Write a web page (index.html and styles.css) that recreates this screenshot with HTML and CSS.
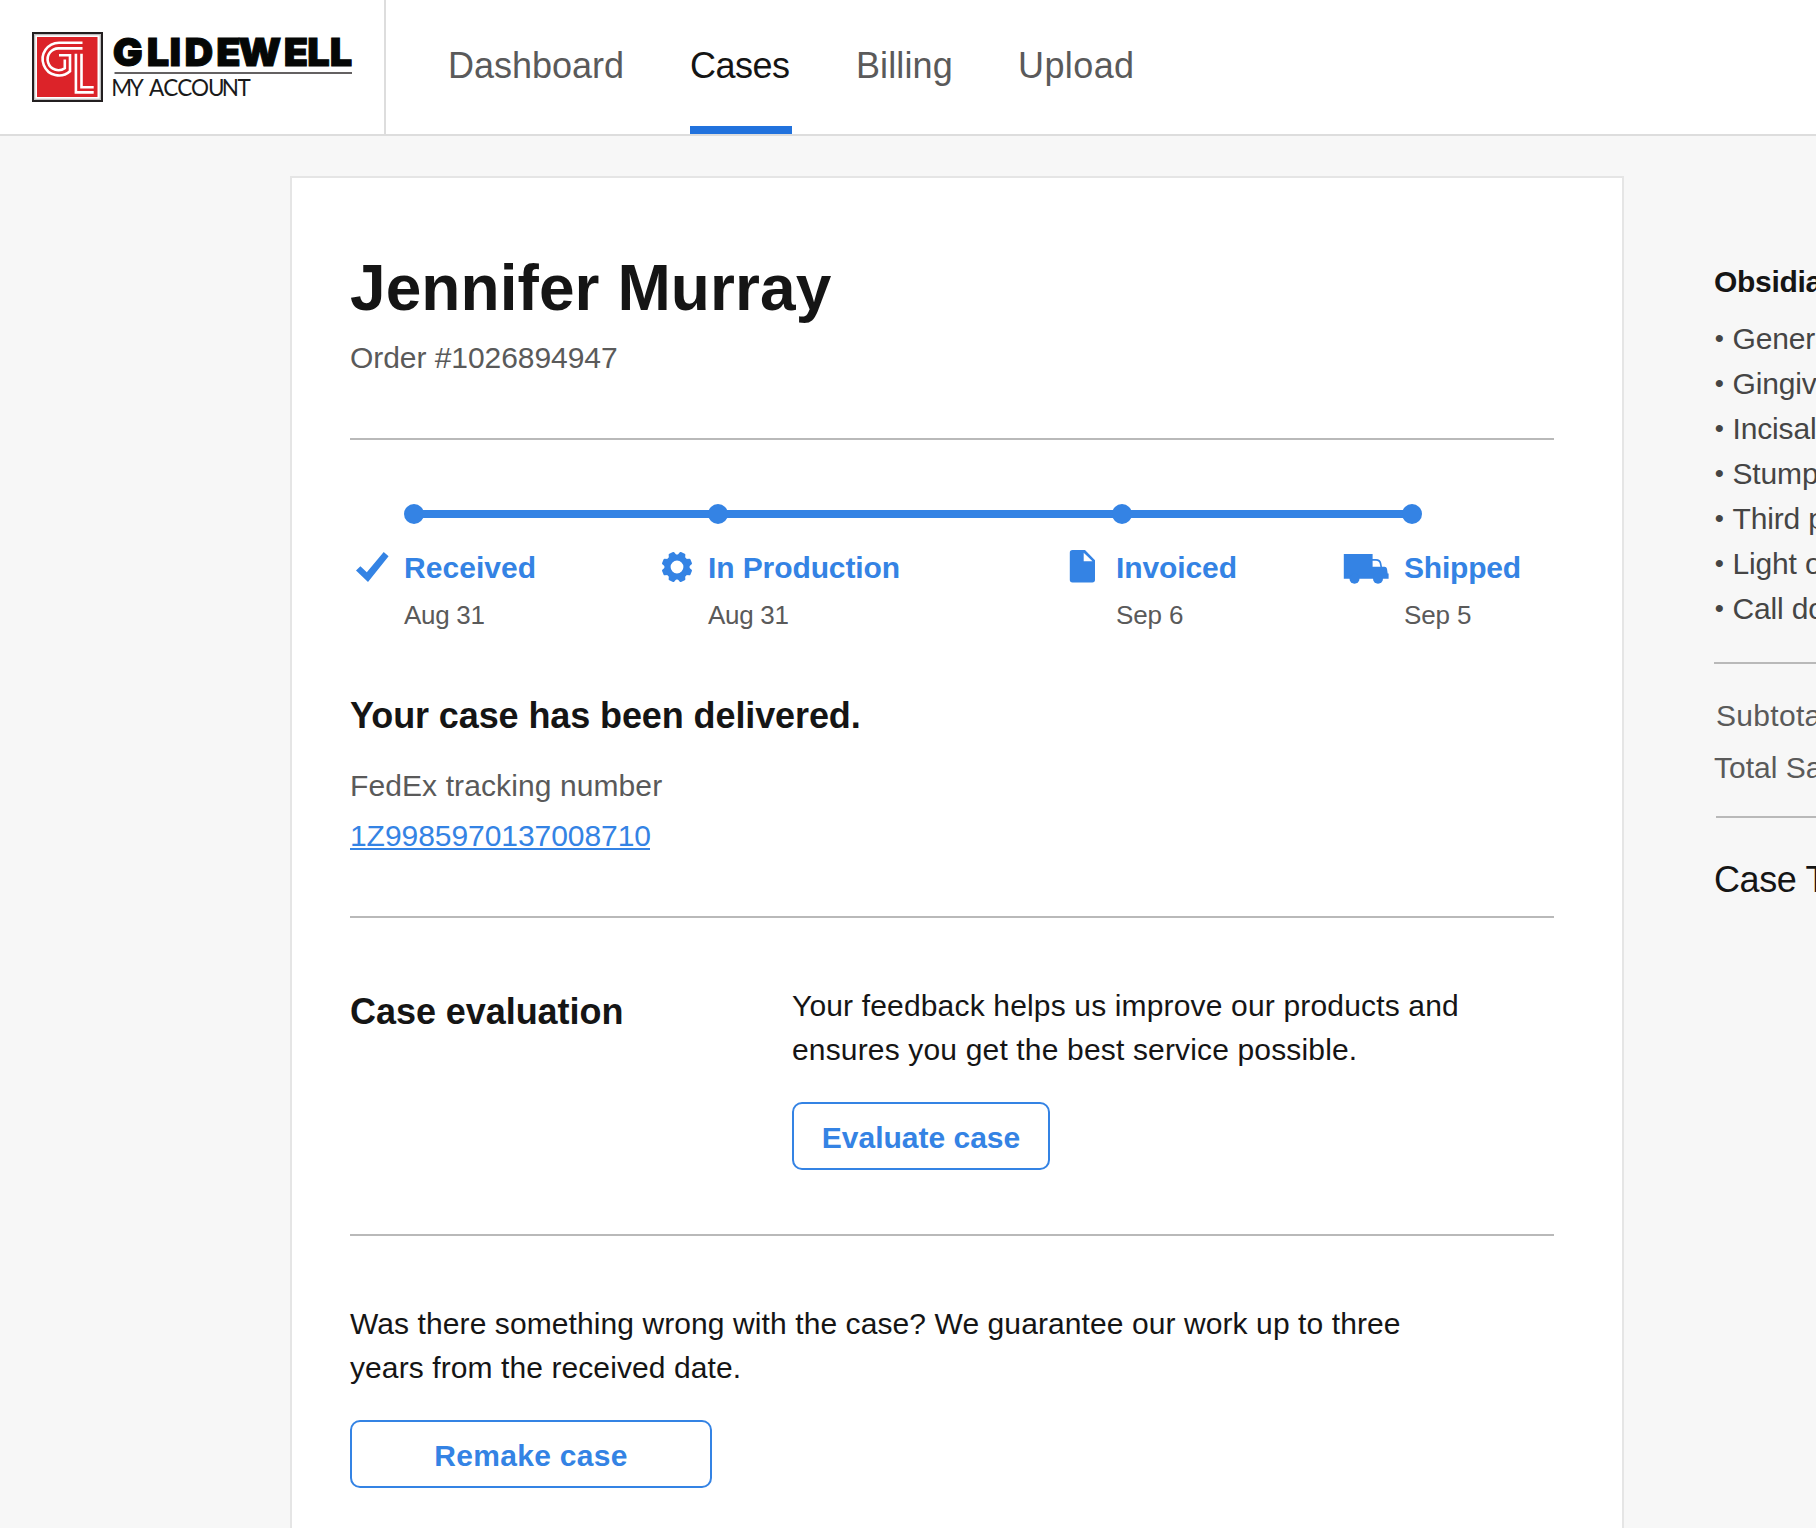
FILE: index.html
```html
<!DOCTYPE html>
<html lang="en">
<head>
<meta charset="utf-8">
<title>Case details - Glidewell My Account</title>
<link rel="stylesheet" href="styles.css">
</head>
<body>
<header class="header">
  <a class="brand">
    <svg class="logo" width="384" height="134" viewBox="0 0 384 134">
      <rect x="33" y="33" width="69" height="68" fill="#fff" stroke="#231f20" stroke-width="2"/>
      <rect x="34.7" y="34.7" width="65.6" height="64.6" fill="none" stroke="#b9b7b8" stroke-width="1.2"/>
      <rect x="37" y="37" width="60.5" height="60" fill="#dc2329"/>
      <g fill="none" stroke="#fff" stroke-width="2.6">
        <path d="M82.500 42.700H59A16.400 16.400 0 1 0 70 71.300V55.200H59"/>
        <path d="M82.500 48.400H59A10.900 10.900 0 1 0 64.800 68.200V59.500"/>
        <path d="M75.900 53.700V92.400H93.700"/>
        <path d="M81.500 53.700V87.200H93.700"/>
      </g>
      <text class="logo-name" transform="scale(1.02 1)" x="110.500 143.800 166.200 180.800 212 233.500 278.300 301.300 323.300" y="66.200">GLIDEWELL</text>
      <rect x="114.500" y="72.300" width="237.500" height="1.400" fill="#231f20"/>
      <text class="logo-sub" x="111.300 129.800 143 149 163.300 177.300 191 208 221.800 237.500" y="96.300">MY ACCOUNT</text>
    </svg>
  </a>
  <nav class="nav">
    <a class="tab tab-dashboard">Dashboard</a>
    <a class="tab tab-cases active">Cases</a>
    <a class="tab tab-billing">Billing</a>
    <a class="tab tab-upload">Upload</a>
  </nav>
</header>
<div class="page">
  <main class="card">
    <h1 class="patient">Jennifer Murray</h1>
    <p class="order">Order #1026894947</p>
    <hr class="rule">
    <div class="track">
      <span class="dot"></span><span class="line"></span>
      <span class="dot"></span><span class="line"></span>
      <span class="dot"></span><span class="line"></span>
      <span class="dot"></span>
    </div>
    <div class="steps">
      <div class="step">
        <svg class="icon" width="54" height="33" viewBox="0 0 54 33"><path d="M6 19.500L10.400 15.200L16.800 21.300L33.700 1L38.600 5.200L18 31Z"/></svg>
        <div><h3 class="step-name loose">Received</h3><p class="step-date tight">Aug 31</p></div>
      </div>
      <div class="step">
        <svg class="icon" width="54" height="33" viewBox="0 0 54 33"><g transform="translate(23 16)"><circle r="9.500" fill="none" stroke="#3483e4" stroke-width="6.200"/><g id="teeth"><path id="tooth" transform="rotate(22.500)" d="M-4.200 -11L-3 -14.600Q-2.800 -15.300 -2 -15.300H2Q2.800 -15.300 3 -14.600L4.200 -11Z"/><use href="#tooth" transform="rotate(45)"/><use href="#tooth" transform="rotate(90)"/><use href="#tooth" transform="rotate(135)"/></g><use href="#teeth" transform="rotate(180)"/></g></svg>
        <div><h3 class="step-name">In Production</h3><p class="step-date tight">Aug 31</p></div>
      </div>
      <div class="step">
        <svg class="icon" width="54" height="33" viewBox="0 0 54 33"><path fill-rule="evenodd" d="M10.500 -1H23L33 9.300V28.800Q33 31.500 30.300 31.500H10.500Q7.800 31.500 7.800 28.800V1.700Q7.800 -1 10.500 -1ZM21.700 1.800V10.200H30.500Z"/></svg>
        <div><h3 class="step-name">Invoiced</h3><p class="step-date">Sep 6</p></div>
      </div>
      <div class="step">
        <svg class="icon" width="54" height="33" viewBox="0 0 54 33"><path fill-rule="evenodd" d="M-6.200 3H22.600V8H26Q30.500 8 31.300 12L32 15.800H34.500Q36.500 15.800 37 17.800L37.700 22.500H38.600V27.700H-6.200ZM22.600 9.700V15.800H30.400L29.600 12.300Q29 9.700 26 9.700Z"/><circle cx="4.500" cy="27.700" r="5"/><circle cx="28" cy="27.700" r="5"/></svg>
        <div><h3 class="step-name snug">Shipped</h3><p class="step-date">Sep 5</p></div>
      </div>
    </div>
    <h2 class="heading status">Your case has been delivered.</h2>
    <p class="carrier">FedEx tracking number</p>
    <a class="tracking">1Z9985970137008710</a>
    <hr class="rule">
    <section class="evaluation">
      <h2 class="heading">Case evaluation</h2>
      <div>
        <p class="copy">Your feedback helps us improve our products and<br>ensures you get the best service possible.</p>
        <button class="button evaluate">Evaluate case</button>
      </div>
    </section>
    <hr class="rule">
    <section class="remake-section">
      <p class="copy copy-remake">Was there something wrong with the case? We guarantee our work up to three<br>years from the received date.</p>
      <button class="button remake">Remake case</button>
    </section>
  </main>
  <aside class="summary">
    <h3 class="product">Obsidian</h3>
    <ul class="specs">
      <li><span class="bullet">•</span>General</li>
      <li><span class="bullet">•</span>Gingiv</li>
      <li><span class="bullet">•</span>Incisal</li>
      <li><span class="bullet">•</span>Stump</li>
      <li><span class="bullet">•</span>Third p</li>
      <li><span class="bullet">•</span>Light o</li>
      <li><span class="bullet">•</span>Call do</li>
    </ul>
    <hr class="rule summary-rule">
    <p class="subtotal">Subtotal</p>
    <p class="sales">Total Sa</p>
    <hr class="rule total-rule">
    <p class="total">Case T</p>
  </aside>
</div>
</body>
</html>
```
FILE: styles.css
```css
* { box-sizing: border-box; }

html, body { height: 100%; }

body {
  margin: 0;
  overflow: hidden;
  background: #f7f7f7;
  color: #151515;
  font-family: "Liberation Sans", Arial, sans-serif;
  font-size: 30px;
  line-height: 33px;
  display: flex;
  flex-direction: column;
}

h1, h2, h3, p, ul { margin: 0; padding: 0; }

.header {
  flex: none;
  display: flex;
  height: 136px;
  background: #fff;
  border-bottom: 2px solid #ddd;
}

.brand {
  width: 386px;
  border-right: 2px solid #ddd;
}

.logo { display: block; }

.logo-name {
  font: 900 39px Inter, Lato, sans-serif;
  fill: #050706;
  stroke: #050706;
  stroke-width: 1px;
}

.logo-sub {
  font: 400 22.5px Lato, sans-serif;
  fill: #1a1a1a;
}

.nav {
  display: flex;
  gap: 64px;
  padding-left: 62px;
}

.tab {
  height: 134px;
  padding-top: 45px;
  font-size: 36px;
  line-height: 41px;
  color: #5a5a5a;
  white-space: nowrap;
}

.tab-dashboard { width: 178px; letter-spacing: 0; }
.tab-cases { width: 102px; letter-spacing: -0.5px; }
.tab-billing { width: 98px; letter-spacing: 0.1px; }
.tab-upload { letter-spacing: 0.4px; }

.tab.active {
  color: #151515;
  border-bottom: 8px solid #2172dd;
}

.page {
  flex: 1;
  display: flex;
  align-items: stretch;
  padding: 40px 0 0 290px;
}

.card {
  flex: none;
  width: 1334px;
  padding: 74px 68px 0 58px;
  background: #fff;
  border: 2px solid #e5e5e5;
  border-bottom: 0;
}

.patient {
  font-size: 64px;
  line-height: 72px;
  letter-spacing: 0.08px;
}

.order { margin-top: 17px; color: #5a5a5a; letter-spacing: -0.06px; }

.rule {
  height: 2px;
  margin: 64px 0 0;
  border: 0;
  background: #b9b9b9;
}

.track {
  display: grid;
  grid-template-columns: 20px 284px 20px 384px 20px 270px 20px;
  align-items: center;
  margin: 64px 0 0 54px;
}

.dot {
  height: 20px;
  border-radius: 50%;
  background: #3483e4;
}

.line {
  height: 8px;
  margin: 0 -2px;
  background: #3483e4;
}

.steps {
  display: grid;
  grid-template-columns: 304px 408px 288px auto;
  margin-top: 27px;
}

.step { display: flex; white-space: nowrap; }

.icon {
  flex: none;
  overflow: visible;
  fill: #3483e4;
}

.step-name { font-size: 30px; color: #3483e4; letter-spacing: -0.1px; }
.loose { letter-spacing: 0.05px; }
.snug { letter-spacing: -0.2px; }

.step-date {
  margin-top: 16px;
  font-size: 26px;
  line-height: 30px;
  color: #5a5a5a;
  letter-spacing: -0.1px;
}

.step-date.tight { letter-spacing: -0.3px; }

.heading { font-size: 36px; line-height: 41px; letter-spacing: -0.05px; }
.status { margin-top: 65px; letter-spacing: -0.1px; }

.carrier { margin-top: 33px; color: #5a5a5a; letter-spacing: 0.1px; }

.tracking {
  display: block;
  width: 300px;
  height: 31px;
  margin: 17px 0 66px;
  border-bottom: 2px solid #3483e4;
  color: #3483e4;
  letter-spacing: -0.06px;
}

.evaluation {
  display: grid;
  grid-template-columns: 442px 1fr;
  margin-top: 66px;
}

.evaluation .heading { padding-top: 7px; }

.copy {
  line-height: 44px;
  letter-spacing: 0.16px;
  white-space: nowrap;
}

.copy-remake { letter-spacing: 0.09px; }

.button {
  display: block;
  height: 68px;
  margin-top: 30px;
  padding: 2px 0 0;
  border: 2px solid #3483e4;
  border-radius: 10px;
  background: #fff;
  color: #3483e4;
  font: bold 30px/33px "Liberation Sans", Arial, sans-serif;
}

.evaluate { width: 258px; letter-spacing: 0; }
.remake { width: 362px; letter-spacing: 0.3px; }

.remake-section { margin-top: 66px; }

.summary {
  flex: 1;
  min-width: 0;
  overflow: hidden;
  padding: 89px 0 0 90px;
  white-space: nowrap;
}

.product { font-size: 30px; letter-spacing: -0.3px; }

.specs {
  margin-top: 18px;
  list-style: none;
  line-height: 45px;
  color: #454545;
  letter-spacing: -0.15px;
}

.bullet {
  display: inline-block;
  width: 18.5px;
  padding-left: 0.8px;
  font-size: 26px;
  line-height: 1;
  vertical-align: 1.8px;
}

.summary-rule { margin-top: 31px; }
.subtotal { margin: 35px 0 0 2px; color: #5a5a5a; letter-spacing: 0.3px; }
.sales { margin-top: 19px; color: #5a5a5a; }
.total-rule { margin: 32px 0 0 2px; }

.total {
  margin-top: 41px;
  font-size: 36px;
  line-height: 41px;
  letter-spacing: -0.4px;
}
```
